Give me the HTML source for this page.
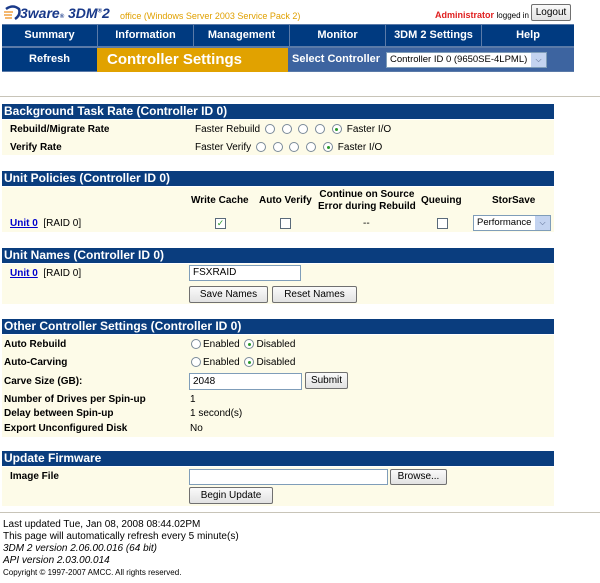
<!DOCTYPE html>
<html><head><meta charset="utf-8"><style>
body{margin:0;width:600px;height:583px;background:#fff;font-family:"Liberation Sans",Arial,sans-serif;font-size:10px;color:#000;position:relative;overflow:hidden}
.a{position:absolute;white-space:nowrap}
.nav{background:#003a80;color:#fff;font-weight:bold;font-size:11px;text-align:center;line-height:21px}
.hd{position:absolute;left:2px;width:552px;height:15px;background:#0a3d7e;color:#fff;font-weight:bold;font-size:12px;line-height:15px;padding-left:2px;box-sizing:border-box}
.bg{position:absolute;left:2px;width:552px;background:#fdfbe8}
.b{font-weight:bold}
.r{display:inline-block;width:8px;height:8px;border:1px solid #7a8a99;border-radius:50%;background:#fff;vertical-align:-2px;margin:0 2px;position:relative}
.r.on::after{content:"";position:absolute;left:2.5px;top:2.5px;width:3px;height:3px;border-radius:50%;background:#2a9a2a}
.cb{position:absolute;width:9px;height:9px;border:1px solid #5a6a7a;background:#fff}
.in{position:absolute;border:1px solid #7f9db9;background:#fff;height:15px;box-sizing:border-box;font-size:10px;line-height:13px;padding-left:3px}
.bt{position:absolute;border:1px solid #707070;border-radius:2px;background:linear-gradient(#fafafa,#e2e2e2);box-sizing:border-box;font-size:10px;text-align:center}
.sel{position:absolute;border:1px solid #7f9db9;background:#fff;height:15px;box-sizing:border-box;font-size:9.5px;line-height:14px;padding-left:3px;overflow:hidden}
.sel i{position:absolute;right:0;top:0;width:15px;height:14px;background:#c3d3f0;font-style:normal;font-size:8px;text-align:center;color:#4d6185}
</style></head><body>
<svg class="a" style="left:3px;top:5px" width="18" height="16" viewBox="0 0 18 16"><path d="M3 4 Q10 -1 16 4 Q18 10 12 14" fill="none" stroke="#1a3a8a" stroke-width="2.5"/><path d="M1 7h9M1 10h8M2 13h7" stroke="#f0a040" stroke-width="1.5"/></svg>
<div class="a" style="left:20px;top:5px;font-size:14px;font-weight:bold;font-style:italic;color:#1a3a8a">3ware<span style="font-size:6px">®</span> 3DM<sup style="font-size:6px">®</sup>2</div>
<div class="a" style="left:120px;top:11px;font-size:9px;color:#e0a000">office (Windows Server 2003 Service Pack 2)</div>
<div class="a" style="left:435px;top:10px;font-size:9px;color:#e02020;font-weight:bold">Administrator <span style="color:#000;font-weight:normal;font-size:8px">logged in</span></div>
<div class="bt" style="left:531px;top:4px;width:40px;height:17px;line-height:15px">Logout</div>
<div class="a" style="left:2px;top:24px;width:572px;height:48px;background:#5a7aa8"></div>
<div class="a nav" style="left:2px;top:25px;width:95px">Summary</div>
<div class="a nav" style="left:98px;top:25px;width:95px">Information</div>
<div class="a nav" style="left:194px;top:25px;width:95px">Management</div>
<div class="a nav" style="left:290px;top:25px;width:95px">Monitor</div>
<div class="a nav" style="left:386px;top:25px;width:95px">3DM 2 Settings</div>
<div class="a nav" style="left:482px;top:25px;width:92px">Help</div>
<div class="a nav" style="left:2px;top:48px;width:95px;height:23px;line-height:23px">Refresh</div>
<div class="a" style="left:97px;top:48px;width:191px;height:24px;background:#e1a200;color:#fff;font-weight:bold;font-size:15px;line-height:23px;padding-left:10px;box-sizing:border-box">Controller Settings</div>
<div class="a" style="left:288px;top:48px;width:286px;height:23px;background:#3d64a0"></div>
<div class="a" style="left:292px;top:53px;color:#fff;font-weight:bold;font-size:11px">Select Controller</div>
<div class="sel" style="left:386px;top:52px;width:161px;height:16px">Controller ID 0 (9650SE-4LPML)<i>&#x2335;</i></div>
<div class="a" style="left:0;top:96px;width:600px;height:1px;background:#c8c4b8"></div>

<div class="hd" style="top:104px">Background Task Rate (Controller ID 0)</div>
<div class="bg" style="top:120px;height:35px"></div>
<div class="a b" style="left:10px;top:124px">Rebuild/Migrate Rate</div>
<div class="a" style="left:195px;top:124px">Faster Rebuild <span class="r"></span> <span class="r"></span> <span class="r"></span> <span class="r"></span> <span class="r on"></span> Faster I/O</div>
<div class="a b" style="left:10px;top:142px">Verify Rate</div>
<div class="a" style="left:195px;top:142px">Faster Verify <span class="r"></span> <span class="r"></span> <span class="r"></span> <span class="r"></span> <span class="r on"></span> Faster I/O</div>

<div class="hd" style="top:171px">Unit Policies (Controller ID 0)</div>
<div class="bg" style="top:187px;height:45px"></div>
<div class="a b" style="left:191px;top:195px">Write Cache</div>
<div class="a b" style="left:259px;top:195px">Auto Verify</div>
<div class="a b" style="left:318px;top:189px;text-align:center;line-height:12px">Continue on Source<br>Error during Rebuild</div>
<div class="a b" style="left:421px;top:195px">Queuing</div>
<div class="a b" style="left:492px;top:195px">StorSave</div>
<div class="a" style="left:10px;top:218px"><u style="color:#00c;font-weight:bold">Unit 0</u> &nbsp;[RAID 0]</div>
<div class="cb" style="left:215px;top:218px;color:#2a9a2a;font-size:9px;line-height:9px;text-align:center">✓</div>
<div class="cb" style="left:280px;top:218px"></div>
<div class="a" style="left:363px;top:218px">--</div>
<div class="cb" style="left:437px;top:218px"></div>
<div class="sel" style="left:473px;top:215px;width:78px;height:16px">Performance<i>&#x2335;</i></div>

<div class="hd" style="top:248px">Unit Names (Controller ID 0)</div>
<div class="bg" style="top:264px;height:40px"></div>
<div class="a" style="left:10px;top:268px"><u style="color:#00c;font-weight:bold">Unit 0</u> &nbsp;[RAID 0]</div>
<div class="in" style="left:189px;top:265px;width:112px;height:16px">FSXRAID</div>
<div class="bt" style="left:189px;top:286px;width:79px;height:17px;line-height:15px">Save Names</div>
<div class="bt" style="left:272px;top:286px;width:85px;height:17px;line-height:15px">Reset Names</div>

<div class="hd" style="top:319px">Other Controller Settings (Controller ID 0)</div>
<div class="bg" style="top:335px;height:102px"></div>
<div class="a b" style="left:4px;top:339px">Auto Rebuild</div>
<div class="a" style="left:189px;top:339px"><span class="r"></span>Enabled <span class="r on"></span>Disabled</div>
<div class="a b" style="left:4px;top:357px">Auto-Carving</div>
<div class="a" style="left:189px;top:357px"><span class="r"></span>Enabled <span class="r on"></span>Disabled</div>
<div class="a b" style="left:4px;top:376px">Carve Size (GB):</div>
<div class="in" style="left:189px;top:373px;width:113px;height:17px;line-height:15px">2048</div>
<div class="bt" style="left:305px;top:372px;width:43px;height:17px;line-height:15px">Submit</div>
<div class="a b" style="left:4px;top:394px">Number of Drives per Spin-up</div>
<div class="a" style="left:190px;top:394px">1</div>
<div class="a b" style="left:4px;top:408px">Delay between Spin-up</div>
<div class="a" style="left:190px;top:408px">1 second(s)</div>
<div class="a b" style="left:4px;top:423px">Export Unconfigured Disk</div>
<div class="a" style="left:190px;top:423px">No</div>

<div class="hd" style="top:451px">Update Firmware</div>
<div class="bg" style="top:467px;height:39px"></div>
<div class="a b" style="left:10px;top:471px">Image File</div>
<div class="in" style="left:189px;top:469px;width:199px;height:16px"></div>
<div class="bt" style="left:390px;top:469px;width:57px;height:16px;line-height:14px">Browse...</div>
<div class="bt" style="left:189px;top:487px;width:84px;height:17px;line-height:15px">Begin Update</div>
<div class="a" style="left:0;top:512px;width:600px;height:1px;background:#c8c4b8"></div>

<div class="a" style="left:3px;top:519px;line-height:12px;font-size:10px">Last updated Tue, Jan 08, 2008 08:44.02PM<br>This page will automatically refresh every 5 minute(s)<br><i>3DM 2 version 2.06.00.016 (64 bit)</i><br><i>API version 2.03.00.014</i><br><span style="font-size:8px">Copyright © 1997-2007 AMCC. All rights reserved.</span></div>
</body></html>
